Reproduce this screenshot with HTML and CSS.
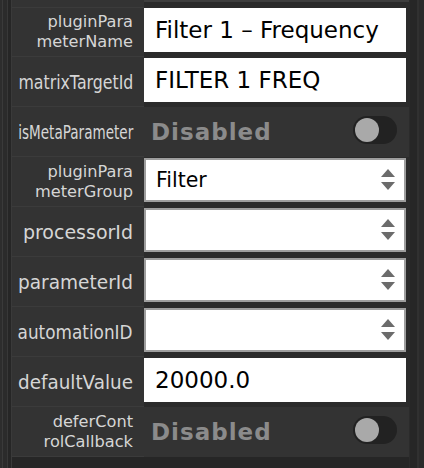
FILE: index.html
```html
<!DOCTYPE html>
<html lang="en">
<head>
<meta charset="UTF-8" />
<title>Parameter Inspector</title>
<link rel="stylesheet" href="styles.css">
</head>
<body>

<div class="inspector">
  <div class="gutter-left"></div>

  <div class="panel">
    <!-- tail of the row above, scrolled out of view -->
    <div class="row row-tail">
      <div class="label"></div>
      <div class="value"></div>
    </div>

    <div class="row">
      <div class="label two-line"><span class="label-text">pluginPara<br>meterName</span></div>
      <div class="value"><div class="text-field">Filter 1 – Frequency</div></div>
    </div>

    <div class="row">
      <div class="label"><span class="label-text">matrixTargetId</span></div>
      <div class="value"><div class="text-field">FILTER 1 FREQ</div></div>
    </div>

    <div class="row">
      <div class="label"><span class="label-text">isMetaParameter</span></div>
      <div class="value toggle-cell">
        <span class="toggle-text">Disabled</span>
        <span class="toggle"><span class="knob"></span></span>
      </div>
    </div>

    <div class="row">
      <div class="label two-line"><span class="label-text">pluginPara<br>meterGroup</span></div>
      <div class="value">
        <div class="select">
          <span>Filter</span>
          <svg class="arrows" width="14" height="22" viewBox="0 0 14 22"><path d="M7 0 L14 8 H0 Z M0 13 H14 L7 21 Z" fill="#6b6b6b"/></svg>
        </div>
      </div>
    </div>

    <div class="row">
      <div class="label"><span class="label-text">processorId</span></div>
      <div class="value">
        <div class="select">
          <span></span>
          <svg class="arrows" width="14" height="22" viewBox="0 0 14 22"><path d="M7 0 L14 8 H0 Z M0 13 H14 L7 21 Z" fill="#6b6b6b"/></svg>
        </div>
      </div>
    </div>

    <div class="row">
      <div class="label"><span class="label-text">parameterId</span></div>
      <div class="value">
        <div class="select">
          <span></span>
          <svg class="arrows" width="14" height="22" viewBox="0 0 14 22"><path d="M7 0 L14 8 H0 Z M0 13 H14 L7 21 Z" fill="#6b6b6b"/></svg>
        </div>
      </div>
    </div>

    <div class="row">
      <div class="label"><span class="label-text">automationID</span></div>
      <div class="value">
        <div class="select">
          <span></span>
          <svg class="arrows" width="14" height="22" viewBox="0 0 14 22"><path d="M7 0 L14 8 H0 Z M0 13 H14 L7 21 Z" fill="#6b6b6b"/></svg>
        </div>
      </div>
    </div>

    <div class="row">
      <div class="label"><span class="label-text">defaultValue</span></div>
      <div class="value"><div class="text-field">20000.0</div></div>
    </div>

    <div class="row">
      <div class="label two-line"><span class="label-text">deferCont<br>rolCallback</span></div>
      <div class="value toggle-cell">
        <span class="toggle-text">Disabled</span>
        <span class="toggle"><span class="knob"></span></span>
      </div>
    </div>
  </div>

  <div class="gutter-right"></div>
</div>

<script>
  // Squash long labels horizontally so they fit the label column
  (function(){
    const maxWidth = 115;
    document.querySelectorAll('.label-text').forEach(el => {
      const w = el.getBoundingClientRect().width;
      if (w > maxWidth) {
        el.style.transform = 'scaleX(' + (maxWidth / w) + ')';
      }
    });
  })();
</script>

</body>
</html>
```

FILE: styles.css
```css
* {
  box-sizing: border-box;
}
html, body {
  margin: 0;
  background: #262626;
}
body {
  font-family: 'DejaVu Sans', sans-serif;
  width: 424px;
  height: 468px;
  overflow: hidden;
}

.inspector {
  display: flex;
  height: 468px;
}

/* thin framing lines on both sides */
.gutter-left {
  width: 12px;
  flex-shrink: 0;
  background: linear-gradient(to right,
    #2d2d2d 0, #2d2d2d 2px,
    #3a3a3a 2px, #3a3a3a 3px,
    #2b2b2b 3px, #2b2b2b 7px,
    #383838 7px, #383838 8px,
    #262626 8px, #262626 11px,
    #3a3a3a 11px, #3a3a3a 12px);
}
.gutter-right {
  flex: 1;
  background: linear-gradient(to right,
    #2b2b2b 0, #2b2b2b 1px,
    #262626 1px, #262626 8px,
    #303030 8px, #303030 10px,
    #2a2a2a 10px);
}

.panel {
  width: 397px;
  align-self: flex-start;
  background: #333;
}

/* Rows */
.row {
  display: grid;
  grid-template-columns: 132px 265px;
  height: 50px;
}
.row-tail {
  height: 7px;
}
.row-tail .value {
  border-top: 2px solid #3e3e3e;
}

.label {
  display: flex;
  align-items: center;
  justify-content: flex-end;
  padding-right: 11px;
  text-align: right;
  color: #d6d6d6;
  font-size: 19px;
  border-bottom: 1px solid #3b3b3b;
  white-space: nowrap;
}
.label-text {
  display: inline-block;
  transform-origin: right center;
}
.label.two-line {
  font-size: 16.2px;
  line-height: 19.5px;
}

.value {
  background: #2b2b2b;
  padding: 1px 3px 5px 0;
}

/* Text fields */
.text-field {
  height: 44px;
  background: #fff;
  color: #000;
  font-size: 23px;
  display: flex;
  align-items: center;
  padding-left: 11px;
  white-space: nowrap;
}

/* Combo boxes */
.select {
  height: 44px;
  background: #fff;
  border: 2px solid #9e9e9e;
  display: flex;
  align-items: center;
  justify-content: space-between;
  padding: 0 9px 0 10px;
  font-size: 20.5px;
  color: #000;
}
.arrows {
  display: block;
}

/* Toggle rows */
.toggle-cell {
  background: #333;
  display: flex;
  align-items: center;
  justify-content: space-between;
  padding: 0 12px 4px 7px;
}
.toggle-text {
  font-weight: 700;
  font-size: 23px;
  letter-spacing: 1px;
  color: #8b8b8b;
  margin-top: 3px;
}
.toggle {
  width: 44px;
  height: 28px;
  border-radius: 14px;
  background: #222;
  display: flex;
  align-items: center;
  padding-left: 2px;
}
.knob {
  width: 24px;
  height: 24px;
  border-radius: 50%;
  background: #a9a9a9;
}
```
